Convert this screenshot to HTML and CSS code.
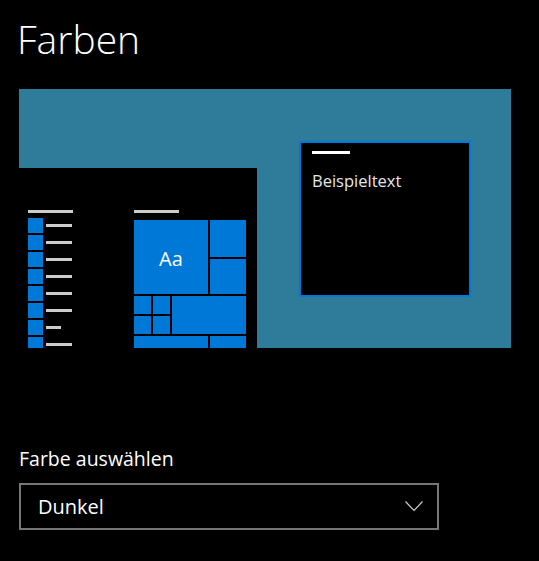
FILE: index.html
```html
<!DOCTYPE html>
<html lang="de">
<head>
  <meta charset="UTF-8">
  <title>Farben</title>
  <link rel="stylesheet" href="styles.css">
</head>
<body>
  <div class="page">
    <h1 class="title">Farben</h1>

    <div class="preview">
      <div class="start">
        <div class="list">
          <div class="bar"></div>
          <div class="item"><span class="sq"></span><span class="line"></span></div>
          <div class="item"><span class="sq"></span><span class="line"></span></div>
          <div class="item"><span class="sq"></span><span class="line"></span></div>
          <div class="item"><span class="sq"></span><span class="line"></span></div>
          <div class="item"><span class="sq"></span><span class="line"></span></div>
          <div class="item"><span class="sq"></span><span class="line"></span></div>
          <div class="item"><span class="sq"></span><span class="line short"></span></div>
          <div class="item"><span class="sq"></span><span class="line"></span></div>
        </div>
        <div class="group">
          <div class="bar"></div>
          <div class="tiles">
            <div class="tile big">Aa</div>
            <div class="tile t-r1"></div>
            <div class="tile t-r2"></div>
            <div class="tile"></div>
            <div class="tile"></div>
            <div class="tile wide"></div>
            <div class="tile"></div>
            <div class="tile"></div>
            <div class="tile bottom"></div>
            <div class="tile"></div>
          </div>
        </div>
      </div>

      <div class="window">
        <div class="wline"></div>
        <div class="wtext">Beispieltext</div>
      </div>
    </div>

    <div class="label">Farbe auswählen</div>
    <div class="select">
      <span>Dunkel</span>
      <svg width="18" height="11" viewBox="0 0 18 11"><path d="M0.5 0.5 L9 9.5 L17.5 0.5" fill="none" stroke="#ccc" stroke-width="1.2"/></svg>
    </div>
  </div>
</body>
</html>
```

FILE: styles.css
```css
body {
  margin: 0;
  background: #000;
  color: #fff;
  font-family: "Open Sans", "Noto Sans", sans-serif;
}

.page {
  padding: 0 0 0 19px;
  width: 520px;
  height: 561px;
  overflow: hidden;
}

.title {
  margin: 0 0 0 -2px;
  padding-top: 15px;
  height: 89px;
  box-sizing: border-box;
  font-size: 39px;
  font-weight: 300;
  line-height: 48px;
}

/* preview area */
.preview {
  position: relative;
  width: 492px;
  height: 259px;
  background: #2e7c99;
  overflow: hidden;
}

.start {
  position: absolute;
  left: 0;
  top: 79px;
  width: 238px;
  height: 180px;
  background: #000;
  box-sizing: border-box;
  padding: 42px 0 0 9px;
  display: flex;
  align-items: flex-start;
  overflow: hidden;
}

.bar {
  flex-shrink: 0;
  width: 45px;
  height: 3px;
  background: #ccc;
}

.list {
  flex-shrink: 0;
  display: flex;
  flex-direction: column;
  gap: 2px;
  width: 45px;
}

.list .bar {
  margin-bottom: 3px;
}

.item {
  flex-shrink: 0;
  display: flex;
  height: 15px;
  gap: 3px;
}

.sq {
  width: 15px;
  height: 15px;
  background: #0078d7;
}

.line {
  margin-top: 6px;
  width: 26px;
  height: 3px;
  background: #ccc;
}

.line.short {
  width: 15px;
}

.group {
  flex-shrink: 0;
  margin-left: 61px;
}

.tiles {
  margin-top: 7px;
  display: grid;
  grid-template-columns: 17px 17px 36px 36px;
  grid-template-rows: 37px 35px 18px 18px 18px;
  gap: 2px;
}

.tile {
  background: #0078d7;
}

.tile.big {
  grid-column: 1 / 4;
  grid-row: 1 / 3;
  display: flex;
  align-items: center;
  justify-content: center;
  font-size: 20px;
  padding-top: 2px;
}

.tile.t-r1 {
  grid-column: 4;
  grid-row: 1;
}

.tile.t-r2 {
  grid-column: 4;
  grid-row: 2;
}

.tile.wide {
  grid-column: 3 / 5;
  grid-row: 3 / 5;
}

.tile.bottom {
  grid-column: 1 / 4;
}

.window {
  position: absolute;
  left: 280px;
  top: 52px;
  width: 172px;
  height: 156px;
  box-sizing: border-box;
  border: 2px solid #0078d7;
  background: #000;
  padding: 8px 11px;
}

.wline {
  width: 38px;
  height: 3px;
  background: #fff;
}

.wtext {
  margin-top: 17px;
  font-size: 16.5px;
  line-height: 20px;
  color: #e6e6e6;
}

/* colour picker */
.label {
  margin-top: 98px;
  font-size: 19.5px;
  line-height: 26px;
}

.select {
  margin-top: 11px;
  width: 420px;
  height: 47px;
  box-sizing: border-box;
  border: 2px solid #767676;
  display: flex;
  align-items: center;
  justify-content: space-between;
  padding: 0 14px 0 17px;
  font-size: 20px;
}
```
